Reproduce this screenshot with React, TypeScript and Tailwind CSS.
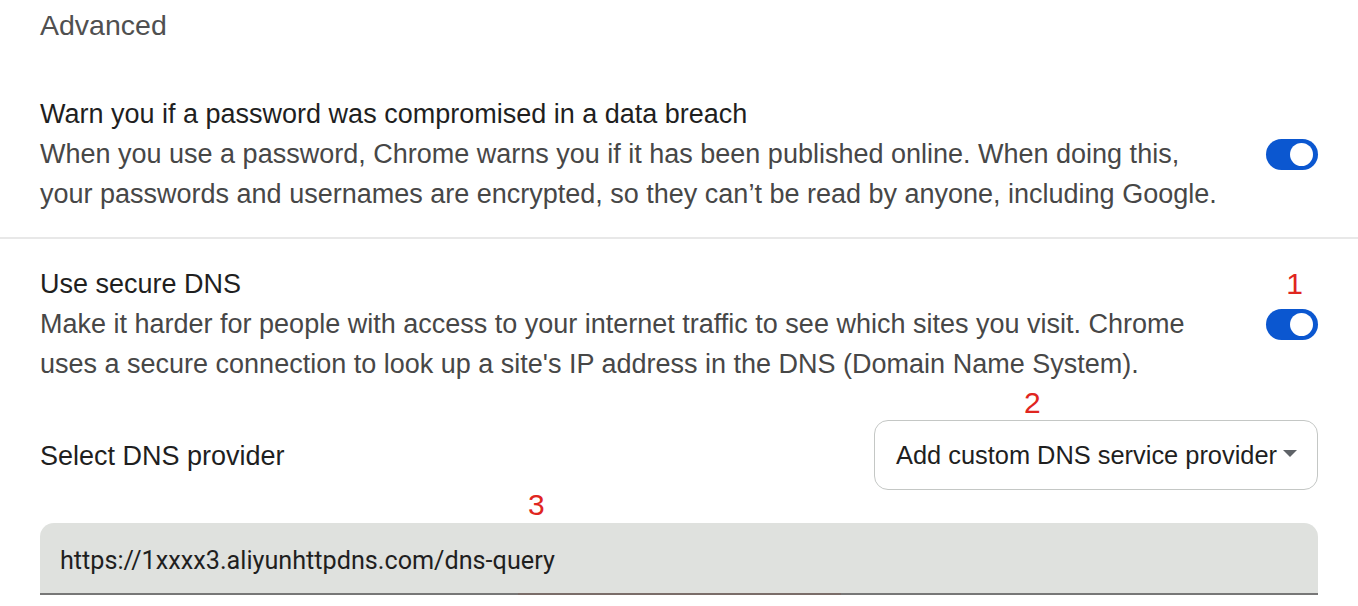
import React from "react";

function Toggle() {
  return (
    <div className="relative h-[31px] w-[52px] shrink-0 rounded-full bg-[#0b57d0]">
      <div className="absolute right-[5px] top-[4px] h-[23px] w-[23px] rounded-full bg-white" />
    </div>
  );
}

export default function App() {
  const sans = { fontFamily: '"Liberation Sans", Arial, sans-serif' };
  return (
    <div className="min-h-[606px] w-[1358px] bg-white" style={sans}>
      <div className="relative px-[40px]">
        <div className="flex h-[50px] items-center text-[28.5px] text-[#505050]">Advanced</div>

        <div className="flex items-center justify-between pb-[23px] pt-[44px]">
          <div className="whitespace-nowrap text-[27px] leading-[40px]">
            <div className="text-[#1f1f1f]">Warn you if a password was compromised in a data breach</div>
            <div className="text-[#474747]">
              When you use a password, Chrome warns you if it has been published online. When doing this,
              <br />
              your passwords and usernames are encrypted, so they can’t be read by anyone, including Google.
            </div>
          </div>
          <Toggle />
        </div>
      </div>

      <div className="h-[2px] w-full bg-[#e8e8e8]" />

      <div className="relative px-[40px]">
        <div className="relative flex items-center justify-between pt-[25px]">
          <div className="whitespace-nowrap text-[27px] leading-[40px]">
            <div className="text-[#1f1f1f]">Use secure DNS</div>
            <div className="text-[#474747]">
              Make it harder for people with access to your internet traffic to see which sites you visit. Chrome
              <br />
              uses a secure connection to look up a site's IP address in the DNS (Domain Name System).
            </div>
          </div>
          <Toggle />
          <span className="absolute right-[15px] top-[30px] text-[30px] leading-none text-[#e0261f]">1</span>
        </div>

        <div className="relative mt-[36px] flex items-center justify-between">
          <span className="pt-[3px] text-[27px] text-[#1f1f1f]">Select DNS provider</span>
          <div className="flex h-[70px] w-[444px] items-center justify-between rounded-[14px] border-[1.5px] border-[#c4c7c5] pl-[21px] pr-[20px]">
            <span className="whitespace-nowrap text-[25.4px] text-[#1f1f1f]">Add custom DNS service provider</span>
            <svg width="14" height="8" viewBox="0 0 14 8" className="mb-[2px]">
              <path d="M0 0 L14 0 L7 7 Z" fill="#5f6368" />
            </svg>
          </div>
          <span className="absolute left-[984px] top-[-32px] text-[30px] leading-none text-[#e0261f]">2</span>
        </div>

        <div className="relative mt-[33px]">
          <div className="flex h-[70px] items-center rounded-t-[14px] bg-[#dfe1de] pl-[20px] pt-[5px]">
            <span className="text-[25.2px] text-[#1f1f1f]" style={{ fontFamily: "Roboto, sans-serif" }}>
              https://1xxxx3.aliyunhttpdns.com/dns-query
            </span>
          </div>
          <div className="relative h-[2px] bg-[#777777]">
            <div className="absolute left-[478px] top-0 h-[2px] w-[323px] bg-[#7a6d69]" />
          </div>
          <span className="absolute left-[488px] top-[-33px] text-[30px] leading-none text-[#e0261f]">3</span>
        </div>
      </div>
    </div>
  );
}
